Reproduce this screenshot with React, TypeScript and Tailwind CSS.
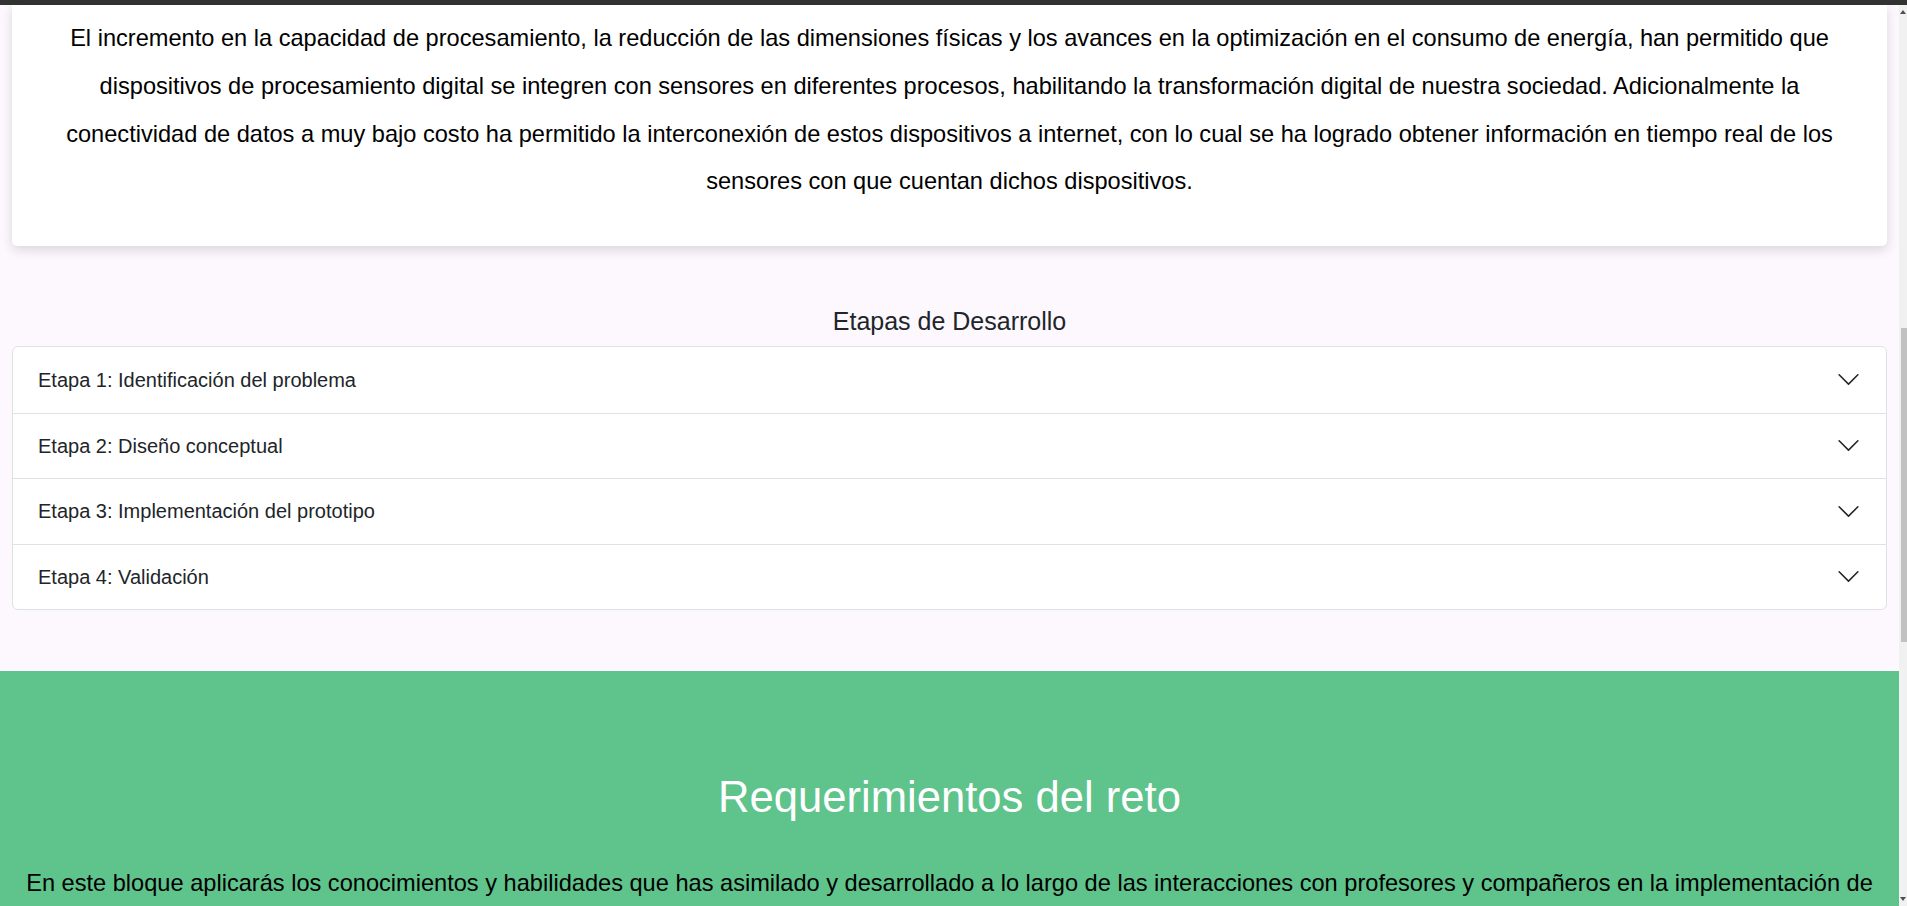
const etapas = [
  "Etapa 1: Identificación del problema",
  "Etapa 2: Diseño conceptual",
  "Etapa 3: Implementación del prototipo",
  "Etapa 4: Validación",
];

const Chevron = () => (
  <svg viewBox="0 0 16 16" className="w-[25px] h-[25px] shrink-0" fill="#212529">
    <path
      fillRule="evenodd"
      d="M1.646 4.646a.5.5 0 0 1 .708 0L8 10.293l5.646-5.647a.5.5 0 0 1 .708.708l-6 6a.5.5 0 0 1-.708 0l-6-6a.5.5 0 0 1 0-.708z"
    />
  </svg>
);

export default function App() {
  return (
    <div className="h-[906px] overflow-hidden flex flex-col bg-[#fcf8fd] font-['Liberation_Sans',Arial,sans-serif]">
      <div className="h-[5px] bg-[#333333] shrink-0" />
      <div className="flex flex-1 min-h-0">
        <main className="flex-1 min-w-0">
          {/* intro card */}
          <div className="mx-[12px] bg-white rounded-b-[5px] shadow-[0_4px_12px_rgba(0,0,0,0.14)] px-[24px] pt-[10px] pb-[40px]">
            <p className="text-center text-black text-[23.6px] leading-[47.8px]">
              El incremento en la capacidad de procesamiento, la reducción de las dimensiones físicas y los avances en la
              optimización en el consumo de energía, han permitido que dispositivos de procesamiento digital se integren con
              sensores en diferentes procesos, habilitando la transformación digital de nuestra sociedad. Adicionalmente la
              conectividad de datos a muy bajo costo ha permitido la interconexión de estos dispositivos a internet, con lo cual
              se ha logrado obtener información en tiempo real de los sensores con que cuentan dichos dispositivos.
            </p>
          </div>

          {/* etapas */}
          <section className="mx-[12px] mt-[60px]">
            <h5 className="text-center text-[25px] leading-[30px] text-[#212529] mb-[10px]">Etapas de Desarrollo</h5>
            <div className="bg-white border border-[#dee2e6] rounded-[6px]">
              {etapas.map((e, i) => (
                <button
                  key={e}
                  className={`w-full h-[65.5px] flex items-center justify-between pl-[25px] pr-[25px] text-left text-[20px] text-[#212529] ${
                    i > 0 ? "border-t border-[#dee2e6]" : ""
                  }`}
                >
                  <span>{e}</span>
                  <Chevron />
                </button>
              ))}
            </div>
          </section>

          {/* requerimientos */}
          <section className="mt-[61px] bg-[#5fc38c] pt-[100px] px-[24px] pb-[60px]">
            <h2 className="text-center text-white text-[43.6px] leading-[52px] mb-[37px]">Requerimientos del reto</h2>
            <p className="text-center text-black text-[23.6px] leading-[47.8px]">
              En este bloque aplicarás los conocimientos y habilidades que has asimilado y desarrollado a lo largo de las
              interacciones con profesores y compañeros en la implementación de un prototipo funcional que integre los
              conceptos del curso.
            </p>
          </section>
        </main>

        {/* scrollbar */}
        <div className="w-[8px] shrink-0 bg-[#f1f1f1] flex flex-col">
          <div className="h-[14px] flex items-center justify-end pr-[1px]">
            <div className="w-0 h-0 border-l-[3px] border-r-[3px] border-b-[4px] border-l-transparent border-r-transparent border-b-[#505050]" />
          </div>
          <div className="mt-[309px] ml-[2px] h-[314px] bg-[#c1c1c1]" />
          <div className="flex-1" />
          <div className="h-[14px] flex items-center justify-end pr-[1px]">
            <div className="w-0 h-0 border-l-[3px] border-r-[3px] border-t-[4px] border-l-transparent border-r-transparent border-t-[#505050]" />
          </div>
        </div>
      </div>
    </div>
  );
}
